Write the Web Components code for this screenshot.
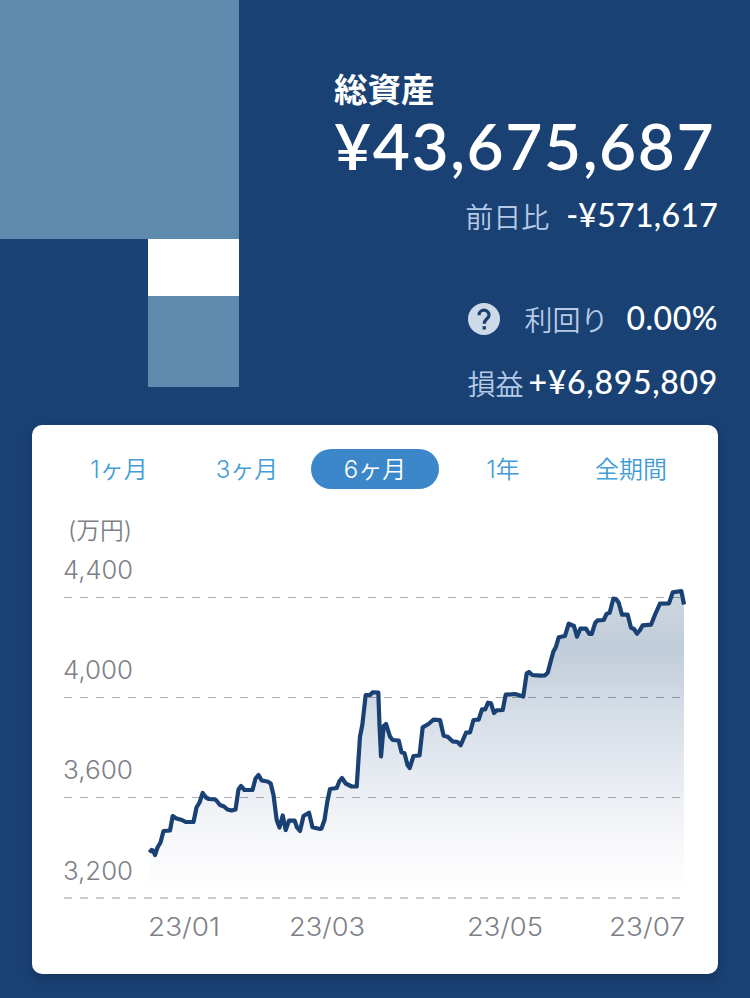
<!DOCTYPE html>
<html lang="ja">
<head>
<meta charset="utf-8">
<title>総資産</title>
<style>
    body {
        margin: 0;
        background-color: #1a4173;
        font-family: Lato, "Noto Sans CJK JP", sans-serif;
    }
</style>
</head>
<body>
<asset-page></asset-page>

<script>
class BlockArt extends HTMLElement {
    constructor() {
        super();
        this.attachShadow({ mode: 'open' });

        const CSS = /* css */
        `
        :host {
            display: flex;
            flex-direction: column;
            align-items: flex-end;
            width: 239px;
        }

        .large {
            width: 239px;
            height: 239px;
            background-color: #5e8aae;
        }

        .white {
            width: 91px;
            height: 57px;
            background-color: #fff;
        }

        .small {
            width: 91px;
            height: 91px;
            background-color: #5e8aae;
        }
        `;

        this.shadowRoot.innerHTML = /* html */
        `
        <style>${CSS}</style>
        <div class="large"></div>
        <div class="white"></div>
        <div class="small"></div>
        `;
    }
}

class HelpIcon extends HTMLElement {
    constructor() {
        super();
        this.attachShadow({ mode: 'open' });
        this.shadowRoot.innerHTML = /* html */
        `
        <style>
        :host { display: block; width: 32px; height: 32px; }
        svg { display: block; }
        </style>
        <svg width="32" height="32" viewBox="0 0 32 32">
            <circle cx="16" cy="16" r="16" fill="#cdd9e6"/>
            <path d="M11 12.2a5 5 0 1 1 10 0c0 3.4-4.8 3.9-4.8 8.6" fill="none" stroke="#1a4173" stroke-width="3.2"/>
            <rect x="14.6" y="23.2" width="3.3" height="3.3" fill="#1a4173"/>
        </svg>
        `;
    }
}

// One "label + value" line, the icon slot is optional
class StatRow extends HTMLElement {
    constructor() {
        super();
        this.attachShadow({ mode: 'open' });

        const CSS = /* css */
        `
        :host {
            display: flex;
            align-items: center;
            justify-content: flex-end;
            height: 40px;
            line-height: 40px;
            color: #fff;
        }

        .label {
            color: #b5cbe6;
            font-size: 28px;
            font-weight: 350;
            white-space: nowrap;
            padding-top: 1px;
            margin-right: var(--gap, 0);
        }

        .value {
            font-size: 32px;
            font-weight: 500;
            white-space: nowrap;
            letter-spacing: var(--spacing, 0);
            padding-bottom: 3px;
        }
        `;

        this.shadowRoot.innerHTML = /* html */
        `
        <style>${CSS}</style>
        <slot name="icon"></slot>
        <span class="label">${this.getAttribute('label') || ''}</span>
        <span class="value">${this.getAttribute('value') || ''}</span>
        `;
    }
}

class AssetSummary extends HTMLElement {
    constructor() {
        super();
        this.attachShadow({ mode: 'open' });

        const CSS = /* css */
        `
        :host {
            display: block;
            box-sizing: border-box;
            width: 416px;
            padding: 64px 32px 0 0;
            color: #fff;
        }

        h1 {
            margin: 0;
            font-size: 33.5px;
            line-height: 50px;
            font-weight: 700;
        }

        .total {
            font-size: 64px;
            line-height: 64px;
            font-weight: 600;
            letter-spacing: 1.6px;
            white-space: nowrap;
        }

        .change { margin-top: 18px; --gap: 17px; --spacing: .3px; }
        .yield { margin-top: 63px; --gap: 18px; --spacing: .5px; }
        .profit { margin-top: 24px; --gap: 5px; --spacing: .7px; }
        help-icon { margin-right: 24px; }
        `;

        this.shadowRoot.innerHTML = /* html */
        `
        <style>${CSS}</style>
        <h1>総資産</h1>
        <div class="total">¥43,675,687</div>
        <stat-row class="change" label="前日比" value="-¥571,617"></stat-row>
        <stat-row class="yield" label="利回り" value="0.00%"><help-icon slot="icon"></help-icon></stat-row>
        <stat-row class="profit" label="損益" value="+¥6,895,809"></stat-row>
        `;
    }
}

class PeriodTab extends HTMLElement {
    constructor() {
        super();
        this.attachShadow({ mode: 'open' });

        const CSS = /* css */
        `
        :host {
            display: flex;
            justify-content: center;
            width: 128px;
            height: 40px;
            border-radius: 20px;
            line-height: 42px;
            font-family: Inter, "Noto Sans CJK JP", sans-serif;
            font-size: 24px;
            font-weight: 350;
            color: #439cd6;
            cursor: pointer;
        }

        :host([selected]) {
            background-color: #3c87ca;
            color: #fff;
        }
        `;

        this.shadowRoot.innerHTML = /* html */
        `
        <style>${CSS}</style>
        <span><slot></slot></span>
        `;
    }
}

class AssetChart extends HTMLElement {
    constructor() {
        super();
        this.attachShadow({ mode: 'open' });

        const POINTS = [
            [149.5, 852.5], [151.5, 850], [153, 850.5], [155, 855], [157.5, 847.5], [160.5, 842.5], [163.5, 831], [170, 830.5],
            [172.7, 816], [176.5, 818.5], [182, 820], [185.7, 822], [193.5, 822], [196.5, 807.5], [199.5, 802.5], [202.7, 793],
            [206, 797.5], [209, 799], [215.5, 799.5], [220, 805], [224, 806.5], [227.5, 809.5], [231.5, 810.5], [235.5, 809.5],
            [238.5, 789.5], [241, 786], [244.5, 790], [252.5, 790], [255.5, 778.5], [258.5, 775], [261.7, 780.5], [267.5, 781.5],
            [270.7, 783.5], [273.5, 795], [276.7, 820], [279.5, 827.5], [282.7, 815.5], [285.7, 830], [289, 820.5], [294.7, 820.7],
            [297, 827.5], [300, 831], [303.5, 816], [309, 812.7], [312.5, 827.3], [320, 829], [321.5, 828.5], [324.5, 820],
            [327.3, 801.7], [330, 789], [336.7, 788], [339.5, 781], [342, 778], [345.7, 783.5], [351.7, 786.5], [356.7, 786.5],
            [360, 736.7], [362.3, 725], [365.7, 695], [370, 695], [372.7, 692.3], [378.3, 692.5], [379.5, 725], [381, 756.5],
            [383.7, 726], [386, 724], [390, 736.7], [392.7, 740], [398.7, 740.5], [401.5, 752.3], [404.5, 753.3], [407.5, 765],
            [409.7, 768], [413.5, 756], [419.5, 755.5], [422.7, 727.3], [428.5, 724], [433.5, 719.7], [440, 720], [443.7, 735.7],
            [447.7, 736.7], [452.5, 741.3], [457.5, 742], [460.7, 745.3], [466, 732.7], [470, 732.5], [473.5, 720], [478.7, 719.7],
            [482, 709.3], [485.3, 709.3], [488, 702.7], [491, 703.3], [494, 713], [496.7, 710.3], [502.7, 710], [505.7, 694.7],
            [515, 694], [523.3, 696.5], [526.7, 673.3], [529, 672], [532.3, 675], [540, 675.7], [545, 675.3], [547.7, 672.7],
            [550, 664], [553.3, 651.7], [556, 646.7], [558.7, 637.3], [565, 636], [568.7, 623.7], [574, 626], [577, 636.7],
            [580.3, 628.7], [586, 628.7], [589.3, 634], [591.7, 634], [595.3, 622.7], [597.7, 620.3], [603.7, 620], [606.7, 613.7],
            [609.7, 612.7], [613.3, 598.7], [616, 599], [618.7, 602.7], [622, 614.7], [627.7, 614.7], [631, 627.7], [634, 629],
            [637, 633.7], [640, 630], [642.7, 625.3], [651, 624.7], [655.3, 614], [660, 603.7], [669, 603.3], [672.7, 592.3],
            [681.3, 591], [684, 604.5]
        ];
        const line = POINTS.map(p => p.join(',')).join(' ');

        // [text, x, baseline, width]
        const LABELS = [
            ['(万円)', 68, 539, 64],
            ['4,400', 63, 579, 70],
            ['4,000', 63, 679, 70],
            ['3,600', 63, 779, 70],
            ['3,200', 63, 880, 70],
            ['23/01', 148, 936, 72],
            ['23/03', 289, 936, 76],
            ['23/05', 467, 936, 76],
            ['23/07', 609, 936, 76]
        ];
        const labels = LABELS.map(([text, x, y, width]) =>
            `<text x="${x}" y="${y}" textLength="${width}" lengthAdjust="spacingAndGlyphs">${text}</text>`
        ).join('');

        const CSS = /* css */
        `
        :host { display: block; }
        svg { display: block; }

        text {
            font-family: Inter, "Noto Sans CJK JP", sans-serif;
            font-size: 25px;
            font-weight: 300;
            fill: #7d8087;
        }

        text:first-of-type {
            font-size: 24px;
            font-weight: 350;
        }

        .grid line {
            stroke: #000;
            stroke-opacity: .32;
            stroke-dasharray: 8 8;
        }

        .grid .base {
            stroke-width: 2;
            stroke-opacity: .2;
        }
        `;

        this.shadowRoot.innerHTML = /* html */
        `
        <style>${CSS}</style>
        <svg width="686" height="474" viewBox="32 500 686 474">
            <defs>
                <linearGradient id="fade" gradientUnits="userSpaceOnUse" x1="0" y1="590" x2="0" y2="892">
                    <stop offset="0" stop-color="#cfd8e2"/>
                    <stop offset=".19" stop-color="#c0ccd9"/>
                    <stop offset=".36" stop-color="#d1dae4"/>
                    <stop offset=".58" stop-color="#e4e9f0"/>
                    <stop offset=".8" stop-color="#f5f6f9"/>
                    <stop offset="1" stop-color="#fff"/>
                </linearGradient>
            </defs>
            <polygon points="${line} 684,892 149.5,892" fill="url(#fade)"/>
            <g class="grid">
                <line x1="64" y1="597.5" x2="684" y2="597.5"/>
                <line x1="64" y1="697.5" x2="684" y2="697.5"/>
                <line x1="64" y1="797.5" x2="684" y2="797.5"/>
                <line class="base" x1="64" y1="898" x2="684" y2="898"/>
            </g>
            <polyline points="${line}" fill="none" stroke="#1a4173" stroke-width="4.2" stroke-linejoin="round"/>
            ${labels}
        </svg>
        `;
    }
}

class ChartCard extends HTMLElement {
    constructor() {
        super();
        this.attachShadow({ mode: 'open' });

        const CSS = /* css */
        `
        :host {
            display: block;
            height: 549px;
            margin: 0 32px;
            background-color: #fff;
            border-radius: 10px;
            box-shadow: 0 4px 10px rgba(0, 0, 0, .2);
        }

        nav {
            display: flex;
            justify-content: center;
            padding: 24px 0 11px;
        }
        `;

        this.shadowRoot.innerHTML = /* html */
        `
        <style>${CSS}</style>
        <nav>
            <period-tab>1ヶ月</period-tab>
            <period-tab>3ヶ月</period-tab>
            <period-tab selected>6ヶ月</period-tab>
            <period-tab>1年</period-tab>
            <period-tab>全期間</period-tab>
        </nav>
        <asset-chart></asset-chart>
        `;
    }
}

class AssetPage extends HTMLElement {
    constructor() {
        super();
        this.attachShadow({ mode: 'open' });

        const CSS = /* css */
        `
        :host {
            display: block;
            width: 750px;
            height: 998px;
        }

        header {
            display: flex;
            justify-content: space-between;
            height: 425px;
        }
        `;

        this.shadowRoot.innerHTML = /* html */
        `
        <style>${CSS}</style>
        <header>
            <block-art></block-art>
            <asset-summary></asset-summary>
        </header>
        <chart-card></chart-card>
        `;
    }
}

// Define the custom elements
customElements.define('block-art', BlockArt);
customElements.define('help-icon', HelpIcon);
customElements.define('stat-row', StatRow);
customElements.define('asset-summary', AssetSummary);
customElements.define('period-tab', PeriodTab);
customElements.define('asset-chart', AssetChart);
customElements.define('chart-card', ChartCard);
customElements.define('asset-page', AssetPage);
</script>
</body>
</html>
